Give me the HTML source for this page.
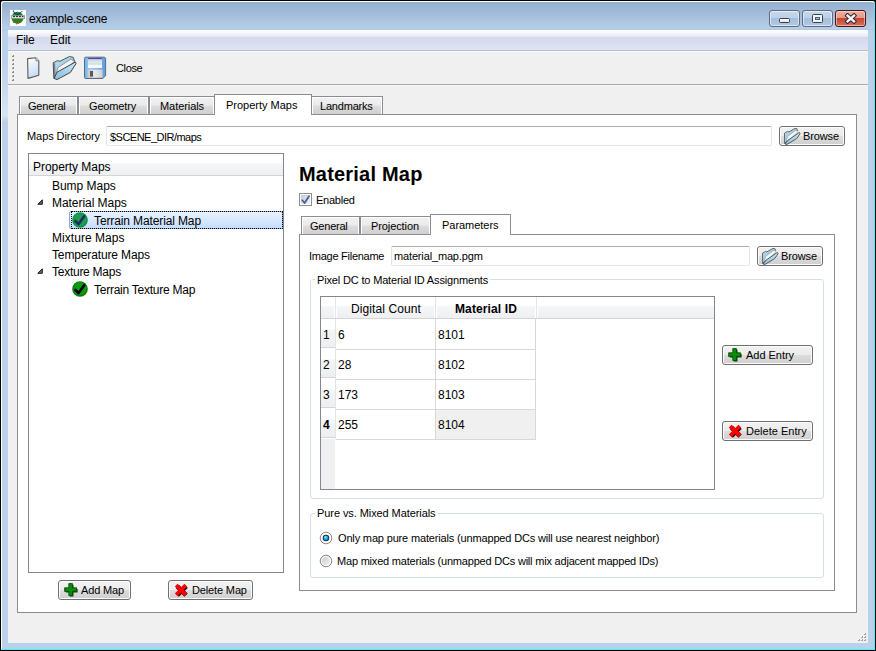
<!DOCTYPE html>
<html><head><meta charset="utf-8">
<style>
*{box-sizing:border-box;margin:0;padding:0}
html,body{width:876px;height:651px;overflow:hidden;background:#000}
body{position:relative;font-family:"Liberation Sans",sans-serif;color:#000}
.a{position:absolute}
.t{position:absolute;white-space:nowrap;font-size:11px;line-height:13px}
.s{position:absolute;white-space:nowrap;font-size:12px;line-height:14px}
.tab{position:absolute;border:1px solid #898c95;border-bottom:none;background:linear-gradient(#f2f2f2 0,#ebebeb 8px,#dddddd 9px,#cfcfcf 100%);box-shadow:inset 1px 1px 0 #fff,inset -1px 0 0 #fff}
.tabsel{position:absolute;border:1px solid #898c95;border-bottom:none;background:#fff}
.pane{position:absolute;border:1px solid #898c95;background:#fff}
.edit{position:absolute;border:1px solid;border-color:#abadb3 #e2e3ea #e3e9ef #e2e3ea;border-radius:2px;background:#fff}
.btn{position:absolute;border:1px solid #707070;border-radius:3px;background:linear-gradient(#f2f2f2 0,#ebebeb 50%,#dddddd 50%,#cfcfcf 100%);box-shadow:inset 0 0 0 1px #fcfcfc}
.grp{position:absolute;border:1px solid #d5dfe5;border-radius:3px}
.gtitle{position:absolute;background:#fff;padding:0 2px}
</style></head><body>
<!-- window frame -->
<div class="a" style="left:1px;top:1px;width:874px;height:649px;background:#fff;border-radius:3px 3px 0 0"></div>
<div class="a" style="left:1px;top:1px;width:874px;height:649px;border-right:1px solid #3ff0ff;border-bottom:1px solid #3ff0ff;border-top:1px solid #fff;border-left:1px solid #fff;border-radius:3px 3px 0 0;background:linear-gradient(#95afcf 0,#a1bbd8 11px,#b7cee8 26px,#b0c8e2 28px,#b9d1ea 29px)"></div>
<div class="a" style="left:2px;top:60px;width:6px;height:62px;background:linear-gradient(#b9d1ea 0,#c9ddf1 35px,#d6e6f6 55px,#b9d1ea 62px)"></div>
<!-- client -->
<div class="a" style="left:8px;top:30px;width:860px;height:613px;background:#f0f0f0"></div>

<!-- title -->
<svg class="a" style="left:10px;top:10px" width="16" height="16" viewBox="0 0 16 16">
<rect x="0" y="0" width="16" height="16" fill="#fff"/>
<circle cx="7.5" cy="7.8" r="6" fill="#158a15"/>
<path d="M0.8 5.2 H15 V8.8 H0.8 Z" fill="#9a9a9a"/>
<path d="M1.8 6.2 H14 V7.8 H1.8 Z" fill="#e8e8e8"/>
<path d="M3 6.5 H5 M6 6.5 H8 M9 6.5 H11 M12 6.5 H13.5" stroke="#333" stroke-width="1"/>
<path d="M3.5 9.5 V13 M6.5 9.5 V14.5 M8.5 9.5 V14" stroke="#b04a20" stroke-width="0.8"/>
<path d="M3.4 0.4 L4 2.5 L7.6 4.8 L11.5 1.8 L12.5 1.2" stroke="#0010d8" stroke-width="0.9" fill="none"/>
</svg>
<div class="s" style="letter-spacing:-0.20px;left:29px;top:12px">example.scene</div>


<!-- title buttons -->
<div class="a" style="left:769px;top:10px;width:31px;height:17px;border:1px solid #5d6b80;border-radius:3px;background:linear-gradient(#c6d8ec 0,#bcd0e8 7px,#a5bedb 7px,#b2c8e2 100%);box-shadow:inset 0 0 0 1px rgba(255,255,255,.55)"></div>
<div class="a" style="left:779px;top:18px;width:11px;height:5px;border:1px solid #353f52;border-radius:1.5px;background:linear-gradient(#fff,#e4e4e4)"></div>
<div class="a" style="left:802px;top:10px;width:31px;height:17px;border:1px solid #5d6b80;border-radius:3px;background:linear-gradient(#c6d8ec 0,#bcd0e8 7px,#a5bedb 7px,#b2c8e2 100%);box-shadow:inset 0 0 0 1px rgba(255,255,255,.55)"></div>
<div class="a" style="left:812px;top:14px;width:11px;height:9px;border:1px solid #353f52;border-radius:1.5px;background:#f4f4f4"></div>
<div class="a" style="left:815px;top:17px;width:5px;height:3px;border:1px solid #4a5a72;background:#a9c2de"></div>
<div class="a" style="left:835px;top:10px;width:31px;height:17px;border:1px solid #4a1414;border-radius:3px;background:linear-gradient(#eab0a0 0,#e29a88 7px,#c4412a 7px,#d5735c 100%);box-shadow:inset 0 0 0 1px rgba(255,220,210,.6)"></div>
<svg class="a" style="left:844px;top:13px" width="14" height="11" viewBox="0 0 14 11">
<path d="M3.6 2.6 L10 8.4 M10 2.6 L3.6 8.4" stroke="#2f2a3a" stroke-width="4.4" stroke-linecap="square"/>
<path d="M3.6 2.6 L10 8.4 M10 2.6 L3.6 8.4" stroke="#f4f4f4" stroke-width="2.4" stroke-linecap="square"/>
</svg>

<!-- menu bar -->
<div class="a" style="left:8px;top:30px;width:860px;height:21px;background:linear-gradient(#fefefe 0,#f7f8fb 3px,#e6e9f3 6.5px,#d4d9eb 7px,#dfe4f3 19px);border-bottom:1px solid #b6bccc"></div>
<div class="s" style="letter-spacing:-0.19px;left:16px;top:33px">File</div>
<div class="s" style="letter-spacing:-0.02px;left:50px;top:33px">Edit</div>

<!-- toolbar -->
<div class="a" style="left:8px;top:51px;width:860px;height:1px;background:#fbfbfb"></div>
<div class="a" style="left:8px;top:84px;width:860px;height:1px;background:#a8a8a8"></div>
<div class="a" style="left:8px;top:85px;width:860px;height:1px;background:#f8f8f8"></div>
<div class="a" style="left:12px;top:55px;width:2px;height:2px;background:linear-gradient(135deg,#dcdcdc 0 35%,#8a8a8a 35%)"></div><div class="a" style="left:12px;top:59px;width:2px;height:2px;background:linear-gradient(135deg,#dcdcdc 0 35%,#8a8a8a 35%)"></div><div class="a" style="left:12px;top:63px;width:2px;height:2px;background:linear-gradient(135deg,#dcdcdc 0 35%,#8a8a8a 35%)"></div><div class="a" style="left:12px;top:67px;width:2px;height:2px;background:linear-gradient(135deg,#dcdcdc 0 35%,#8a8a8a 35%)"></div><div class="a" style="left:12px;top:71px;width:2px;height:2px;background:linear-gradient(135deg,#dcdcdc 0 35%,#8a8a8a 35%)"></div><div class="a" style="left:12px;top:75px;width:2px;height:2px;background:linear-gradient(135deg,#dcdcdc 0 35%,#8a8a8a 35%)"></div><div class="a" style="left:12px;top:79px;width:2px;height:2px;background:linear-gradient(135deg,#dcdcdc 0 35%,#8a8a8a 35%)"></div>
<div class="t" style="letter-spacing:-0.35px;left:116px;top:62px">Close</div>


<!-- toolbar icons -->
<svg class="a" style="left:24px;top:55px" width="20" height="26" viewBox="0 0 20 26">
<defs><linearGradient id="gdoc" x1="0" y1="0" x2="0.3" y2="1"><stop offset="0" stop-color="#ffffff"/><stop offset="1" stop-color="#c9dbf7"/></linearGradient></defs>
<path d="M3.6 3.6 L11.8 2.8 L14.8 5.8 L14.8 20.2 L4 23.4 Z" fill="url(#gdoc)" stroke="#5a5a5a" stroke-width="1.1" stroke-linejoin="round"/>
<path d="M11.8 2.8 L12 5.9 L14.8 5.8" fill="#ddd" stroke="#777" stroke-width="0.8"/>
</svg>
<svg class="a" style="left:50px;top:53px" width="30" height="30" viewBox="0 0 30 30">
<defs><linearGradient id="tfb" x1="0" y1="0" x2="1" y2="1"><stop offset="0" stop-color="#c2e2f4"/><stop offset="0.6" stop-color="#9cc8e2"/><stop offset="1" stop-color="#6f9fbd"/></linearGradient>
<linearGradient id="tff" x1="0" y1="1" x2="1" y2="0"><stop offset="0" stop-color="#86bcdc"/><stop offset="1" stop-color="#c8e8f8"/></linearGradient>
<linearGradient id="tfl" x1="0" y1="0" x2="1" y2="0"><stop offset="0" stop-color="#303a44"/><stop offset="1" stop-color="#8aa4b8"/></linearGradient></defs>
<path d="M3.2 9.7 L7.8 7.6 L9.9 8.3 L19.4 3.5 L23.3 4.3 L24.8 9.2 L8 24 L3.8 25.2 Z" fill="url(#tfb)" stroke="#555" stroke-width="1" stroke-linejoin="round"/>
<path d="M3.4 10.5 L5.2 10 L6 23 L4 25 Z" fill="url(#tfl)" opacity="0.7"/>
<path d="M6.4 19.4 L8.2 14.4 L20.8 6.2 L24.6 8.4 L9 21.6 Z" fill="#f4f4f4" stroke="#7a7a7a" stroke-width="0.7" stroke-linejoin="round"/>
<path d="M4.1 25.4 L7 19.2 L25.4 9 L26 10.6 L20.4 19.4 L7 26.6 Z" fill="url(#tff)" stroke="#444" stroke-width="1" stroke-linejoin="round"/>
</svg>
<svg class="a" style="left:83px;top:56px" width="24" height="24" viewBox="0 0 24 24">
<defs><linearGradient id="gsave" x1="0" y1="0" x2="1" y2="0"><stop offset="0" stop-color="#6fb0f0"/><stop offset="0.25" stop-color="#9ccaf6"/><stop offset="1" stop-color="#5b9ee4"/></linearGradient>
<linearGradient id="glab" x1="0" y1="0" x2="0" y2="1"><stop offset="0" stop-color="#c6d0d2"/><stop offset="0.35" stop-color="#e2eaea"/><stop offset="0.55" stop-color="#cfe0e2"/><stop offset="0.75" stop-color="#ffffff"/><stop offset="1" stop-color="#f2f8ff"/></linearGradient>
<linearGradient id="gsh" x1="0" y1="0" x2="1" y2="0"><stop offset="0" stop-color="#c8c8c8"/><stop offset="0.5" stop-color="#e8e8e8"/><stop offset="1" stop-color="#d0d0d0"/></linearGradient></defs>
<path d="M1.5 2.5 Q1.5 1.2 2.8 1.2 L21.6 1.2 L22.6 2.4 L22.6 19.6 L19.8 22.5 L2.8 22.5 Q1.5 22.5 1.5 21.2 Z" fill="url(#gsave)" stroke="#606a74" stroke-width="1"/>
<rect x="5" y="2" width="14" height="1.2" fill="#5040c0"/>
<rect x="5" y="3.2" width="14" height="8.8" fill="url(#glab)"/>
<rect x="4.5" y="13.6" width="15" height="8" fill="url(#gsh)"/>
<rect x="7" y="15" width="3" height="5.6" fill="#5a5a5a"/>
</svg>


<!-- outer tabs -->
<div class="tab" style="left:19px;top:96px;width:59px;height:18px"></div>
<div class="tab" style="left:78px;top:96px;width:71px;height:18px"></div>
<div class="tab" style="left:149px;top:96px;width:66px;height:18px"></div>
<div class="tab" style="left:311px;top:96px;width:72px;height:18px"></div>
<div class="pane" style="left:17px;top:114px;width:840px;height:499px"></div>
<div class="tabsel" style="left:214px;top:94px;width:98px;height:21px"></div>
<div class="t" style="letter-spacing:-0.22px;left:28px;top:100px">General</div>
<div class="t" style="letter-spacing:-0.16px;left:89px;top:100px">Geometry</div>
<div class="t" style="letter-spacing:-0.07px;left:160px;top:100px">Materials</div>
<div class="t" style="letter-spacing:-0.01px;left:226px;top:99px">Property Maps</div>
<div class="t" style="letter-spacing:-0.20px;left:320px;top:100px">Landmarks</div>

<div class="t" style="letter-spacing:-0.07px;left:27px;top:130px">Maps Directory</div>
<div class="edit" style="left:106px;top:126px;width:666px;height:20px"></div>
<div class="t" style="letter-spacing:-0.52px;left:110px;top:131px">$SCENE_DIR/maps</div>
<div class="btn" style="left:779px;top:126px;width:66px;height:20px"></div>
<div class="t" style="letter-spacing:-0.13px;left:803px;top:130px">Browse</div>

<!-- tree -->
<div class="a" style="left:28px;top:153px;width:256px;height:420px;border:1px solid #828790;background:#fff"></div>
<div class="a" style="left:29px;top:154px;width:254px;height:22px;background:linear-gradient(#fff 0,#fff 9px,#f5f6f8 9px,#eeeff1 100%);border-bottom:1px solid #d5d5d5"></div>
<div class="s" style="letter-spacing:-0.04px;left:33px;top:160px">Property Maps</div>
<div class="s" style="letter-spacing:-0.03px;left:52px;top:179px">Bump Maps</div>
<div class="s" style="letter-spacing:-0.05px;left:52px;top:196px">Material Maps</div>
<div class="a" style="left:69px;top:211px;width:214px;height:18px;border:1px solid #84acdd;border-radius:2px;background:linear-gradient(#eaf3fe,#c6defc)"></div>
<div class="a" style="left:71px;top:211px;width:212px;height:18px;border:1px dotted #000"></div>
<div class="s" style="letter-spacing:-0.12px;left:94px;top:214px">Terrain Material Map</div>
<div class="s" style="letter-spacing:0.05px;left:52px;top:231px">Mixture Maps</div>
<div class="s" style="letter-spacing:-0.14px;left:52px;top:248px">Temperature Maps</div>
<div class="s" style="letter-spacing:-0.26px;left:52px;top:265px">Texture Maps</div>
<div class="s" style="letter-spacing:-0.25px;left:94px;top:283px">Terrain Texture Map</div>
<svg class="a" style="left:36px;top:198px" width="8" height="8"><path d="M6.3 1.8 L6.3 6.3 L1.8 6.3 Z" fill="#6a6a6a" stroke="#1a1a1a" stroke-width="1" stroke-linejoin="round"/></svg>
<svg class="a" style="left:36px;top:267px" width="8" height="8"><path d="M6.3 1.8 L6.3 6.3 L1.8 6.3 Z" fill="#6a6a6a" stroke="#1a1a1a" stroke-width="1" stroke-linejoin="round"/></svg>
<svg class="a" style="left:72px;top:212px" width="16" height="16" viewBox="0 0 16 16">
<circle cx="8" cy="8" r="7.8" fill="#138a4a"/><circle cx="8" cy="7.6" r="6.6" fill="#1c9c50"/>
<path d="M3.4 9 L6.6 12 L12.2 4.2" stroke="#1b2e5e" stroke-width="2.6" fill="none" stroke-linecap="round" stroke-linejoin="round"/>
</svg>
<svg class="a" style="left:72px;top:281px" width="16" height="16" viewBox="0 0 16 16">
<circle cx="8" cy="8" r="7.8" fill="#077a07"/><circle cx="8" cy="7.6" r="6.6" fill="#0c9a0c"/>
<path d="M3.4 9 L6.6 12 L12.2 4.2" stroke="#000" stroke-width="2.6" fill="none" stroke-linecap="round" stroke-linejoin="round"/>
</svg>

<!-- right side -->
<div class="a" style="letter-spacing:0.2px;left:299px;top:164px;font:bold 20px/20px 'Liberation Sans';white-space:nowrap;">Material Map</div>
<div class="a" style="left:299px;top:193px;width:13px;height:13px;border:1px solid #8e8f8f;background:#fff"></div>
<div class="a" style="left:301px;top:195px;width:9px;height:9px;background:linear-gradient(135deg,#c8ccd4,#f0f0f2)"></div>
<svg class="a" style="left:299px;top:193px" width="13" height="13"><path d="M3.3 7.2 L5.6 10 L10 3.3" stroke="#4a5f9a" stroke-width="1.8" fill="none" stroke-linecap="round" stroke-linejoin="round"/></svg>
<div class="t" style="letter-spacing:-0.24px;left:316px;top:194px">Enabled</div>

<div class="tab" style="left:301px;top:216px;width:59px;height:18px"></div>
<div class="tab" style="left:360px;top:216px;width:71px;height:18px"></div>
<div class="pane" style="left:299px;top:234px;width:536px;height:357px"></div>
<div class="tabsel" style="left:430px;top:214px;width:81px;height:21px"></div>
<div class="t" style="letter-spacing:-0.22px;left:310px;top:220px">General</div>
<div class="t" style="letter-spacing:-0.1px;left:371px;top:220px">Projection</div>
<div class="t" style="letter-spacing:-0.03px;left:442px;top:219px">Parameters</div>

<div class="t" style="letter-spacing:-0.26px;left:309px;top:250px">Image Filename</div>
<div class="edit" style="left:391px;top:246px;width:359px;height:20px"></div>
<div class="t" style="letter-spacing:-0.15px;left:394px;top:250px">material_map.pgm</div>
<div class="btn" style="left:757px;top:246px;width:66px;height:20px"></div>
<div class="t" style="letter-spacing:-0.13px;left:781px;top:250px">Browse</div>

<div class="grp" style="left:310px;top:279px;width:514px;height:220px"></div>
<div class="gtitle t" style="letter-spacing:-0.16px;left:315px;top:274px">Pixel DC to Material ID Assignments</div>

<!-- table -->
<div class="a" style="left:320px;top:296px;width:395px;height:194px;border:1px solid #828790;background:#fff"></div>
<div class="a" style="left:321px;top:297px;width:393px;height:22px;background:linear-gradient(#fff 0,#fff 9px,#f5f6f8 9px,#eeeff1 100%);border-bottom:1px solid #d5d5d5"></div>
<div class="a" style="left:335px;top:297px;width:1px;height:21px;background:#e3e4e6;box-shadow:-1px 0 0 #fff,1px 0 0 #fff"></div>
<div class="a" style="left:435px;top:297px;width:1px;height:21px;background:#e3e4e6;box-shadow:-1px 0 0 #fff,1px 0 0 #fff"></div>
<div class="a" style="left:536px;top:297px;width:1px;height:21px;background:#e3e4e6;box-shadow:-1px 0 0 #fff,1px 0 0 #fff"></div>
<div class="a" style="left:321px;top:439px;width:14px;height:50px;background:#f0f0f0"></div>
<div class="a" style="left:321px;top:319px;width:14px;height:29px;background:linear-gradient(#fff 0,#fff 10px,#f3f4f6 11px,#eeeff1 100%);border-bottom:1px solid #d5d5d5"></div>
<div class="a" style="left:335px;top:319px;width:1px;height:30px;background:#e3e4e6"></div>
<div class="a" style="left:336px;top:349px;width:200px;height:1px;background:#d8d8d8"></div>
<div class="s" style="left:323px;top:328px;">1</div>
<div class="s" style="left:338px;top:328px">6</div>
<div class="s" style="left:438px;top:328px">8101</div>
<div class="a" style="left:321px;top:349px;width:14px;height:29px;background:linear-gradient(#fff 0,#fff 10px,#f3f4f6 11px,#eeeff1 100%);border-bottom:1px solid #d5d5d5"></div>
<div class="a" style="left:335px;top:349px;width:1px;height:30px;background:#e3e4e6"></div>
<div class="a" style="left:336px;top:379px;width:200px;height:1px;background:#d8d8d8"></div>
<div class="s" style="left:323px;top:358px;">2</div>
<div class="s" style="left:338px;top:358px">28</div>
<div class="s" style="left:438px;top:358px">8102</div>
<div class="a" style="left:321px;top:379px;width:14px;height:29px;background:linear-gradient(#fff 0,#fff 10px,#f3f4f6 11px,#eeeff1 100%);border-bottom:1px solid #d5d5d5"></div>
<div class="a" style="left:335px;top:379px;width:1px;height:30px;background:#e3e4e6"></div>
<div class="a" style="left:336px;top:409px;width:200px;height:1px;background:#d8d8d8"></div>
<div class="s" style="left:323px;top:388px;">3</div>
<div class="s" style="left:338px;top:388px">173</div>
<div class="s" style="left:438px;top:388px">8103</div>
<div class="a" style="left:321px;top:409px;width:14px;height:29px;background:linear-gradient(#fff 0,#fff 10px,#f3f4f6 11px,#eeeff1 100%);border-bottom:1px solid #d5d5d5"></div>
<div class="a" style="left:335px;top:409px;width:1px;height:30px;background:#e3e4e6"></div>
<div class="a" style="left:336px;top:439px;width:200px;height:1px;background:#d8d8d8"></div>
<div class="s" style="left:323px;top:418px;font-weight:bold;">4</div>
<div class="s" style="left:338px;top:418px">255</div>

<div class="a" style="left:436px;top:410px;width:99px;height:29px;background:#f0f0f0"></div>
<div class="s" style="left:438px;top:418px">8104</div>
<div class="a" style="left:435px;top:319px;width:1px;height:121px;background:#d8d8d8"></div>
<div class="a" style="left:535px;top:319px;width:1px;height:121px;background:#d8d8d8"></div>
<div class="s" style="letter-spacing:0.10px;left:351px;top:302px">Digital Count</div>
<div class="s" style="letter-spacing:0.12px;left:455px;top:302px;font-weight:bold">Material ID</div>

<div class="btn" style="left:722px;top:345px;width:91px;height:20px"></div>
<div class="t" style="letter-spacing:-0.03px;left:746px;top:349px">Add Entry</div>
<div class="btn" style="left:722px;top:421px;width:91px;height:20px"></div>
<div class="t" style="letter-spacing:0.01px;left:746px;top:425px">Delete Entry</div>

<div class="grp" style="left:310px;top:513px;width:514px;height:65px"></div>
<div class="gtitle t" style="letter-spacing:-0.08px;left:315px;top:507px">Pure vs. Mixed Materials</div>
<div class="t" style="letter-spacing:-0.16px;left:338px;top:532px">Only map pure materials (unmapped DCs will use nearest neighbor)</div>
<div class="t" style="letter-spacing:-0.20px;left:337px;top:555px">Map mixed materials (unmapped DCs will mix adjacent mapped IDs)</div>
<svg class="a" style="left:319px;top:531px" width="14" height="14" viewBox="0 0 14 14">
<defs><radialGradient id="rdot" cx="0.35" cy="0.3" r="0.8"><stop offset="0" stop-color="#b8f0ff"/><stop offset="0.5" stop-color="#2aa4e8"/><stop offset="1" stop-color="#1a7cc8"/></radialGradient></defs>
<circle cx="7" cy="7" r="5.8" fill="#fff" stroke="#8a8a8a" stroke-width="1"/>
<circle cx="7" cy="7" r="3.3" fill="#0e3a5e"/><circle cx="7" cy="7" r="2.3" fill="url(#rdot)"/>
</svg>
<svg class="a" style="left:319px;top:554px" width="14" height="14" viewBox="0 0 14 14">
<defs><linearGradient id="rg2" x1="0" y1="0" x2="1" y2="1"><stop offset="0" stop-color="#c9c9c9"/><stop offset="1" stop-color="#f6f6f6"/></linearGradient></defs>
<circle cx="7" cy="7" r="5.8" fill="url(#rg2)" stroke="#8a8a8a" stroke-width="1"/>
<circle cx="7" cy="7" r="4.6" fill="none" stroke="#fff" stroke-width="0.9"/>
</svg>

<div class="btn" style="left:58px;top:580px;width:73px;height:20px"></div>
<div class="t" style="letter-spacing:-0.16px;left:81px;top:584px">Add Map</div>
<div class="btn" style="left:168px;top:580px;width:85px;height:20px"></div>
<div class="t" style="letter-spacing:-0.14px;left:192px;top:584px">Delete Map</div>


<!-- button icons -->
<svg class="a" style="left:780px;top:124px" width="24" height="24" viewBox="0 0 24 24">
<defs><linearGradient id="fb780" x1="0" y1="0" x2="1" y2="1"><stop offset="0" stop-color="#bfe0f2"/><stop offset="1" stop-color="#7fb0cc"/></linearGradient>
<linearGradient id="ff780" x1="0" y1="1" x2="1" y2="0"><stop offset="0" stop-color="#8ec4e4"/><stop offset="1" stop-color="#c4e6f8"/></linearGradient></defs>
<path d="M4.5 9.2 L7.4 7.4 L8.8 7.9 L15 4.4 L16.8 4.5 L17.6 6.4 L6.2 18 L4.6 19.6 Z" fill="url(#fb780)" stroke="#5a5a5a" stroke-width="0.9" stroke-linejoin="round"/>
<path d="M6.6 15.6 L7.8 12.2 L15.8 6.3 L18.2 7.6 L8.4 17 Z" fill="#f6f6f6" stroke="#8a8a8a" stroke-width="0.5" stroke-linejoin="round"/>
<path d="M5 20 L8 16.2 L19.4 8.4 L20.1 9.8 L16.6 14.6 L7 20.4 Z" fill="url(#ff780)" stroke="#4a4a4a" stroke-width="0.9" stroke-linejoin="round"/>
</svg><svg class="a" style="left:758px;top:244px" width="24" height="24" viewBox="0 0 24 24">
<defs><linearGradient id="fb758" x1="0" y1="0" x2="1" y2="1"><stop offset="0" stop-color="#bfe0f2"/><stop offset="1" stop-color="#7fb0cc"/></linearGradient>
<linearGradient id="ff758" x1="0" y1="1" x2="1" y2="0"><stop offset="0" stop-color="#8ec4e4"/><stop offset="1" stop-color="#c4e6f8"/></linearGradient></defs>
<path d="M4.5 9.2 L7.4 7.4 L8.8 7.9 L15 4.4 L16.8 4.5 L17.6 6.4 L6.2 18 L4.6 19.6 Z" fill="url(#fb758)" stroke="#5a5a5a" stroke-width="0.9" stroke-linejoin="round"/>
<path d="M6.6 15.6 L7.8 12.2 L15.8 6.3 L18.2 7.6 L8.4 17 Z" fill="#f6f6f6" stroke="#8a8a8a" stroke-width="0.5" stroke-linejoin="round"/>
<path d="M5 20 L8 16.2 L19.4 8.4 L20.1 9.8 L16.6 14.6 L7 20.4 Z" fill="url(#ff758)" stroke="#4a4a4a" stroke-width="0.9" stroke-linejoin="round"/>
</svg><svg class="a" style="left:728px;top:348px" width="15" height="15" viewBox="0 0 15 15">
<path d="M5.3 1.2 H8.9 V5.3 H13 V8.9 H8.9 V13 H5.3 V8.9 H1.2 V5.3 H5.3 Z" fill="#004a00" transform="translate(0.6,0.6)"/>
<path d="M4.8 0.6 H8.4 V4.8 H12.6 V8.4 H8.4 V12.6 H4.8 V8.4 H0.6 V4.8 H4.8 Z" fill="#0a8f0a" stroke="#0b3d0b" stroke-width="0.8"/>
</svg><svg class="a" style="left:728px;top:424px" width="15" height="15" viewBox="0 0 15 15">
<path d="M2.6 2.6 L11.4 11.4 M11.4 2.6 L2.6 11.4" stroke="#2a0a0a" stroke-width="4.6" stroke-linecap="butt" transform="translate(0.7,0.7)"/>
<path d="M2.2 2.2 L11.8 11.8 M11.8 2.2 L2.2 11.8" stroke="#ff0000" stroke-width="3.8" stroke-linecap="butt"/>
</svg><svg class="a" style="left:64px;top:583px" width="15" height="15" viewBox="0 0 15 15">
<path d="M5.3 1.2 H8.9 V5.3 H13 V8.9 H8.9 V13 H5.3 V8.9 H1.2 V5.3 H5.3 Z" fill="#004a00" transform="translate(0.6,0.6)"/>
<path d="M4.8 0.6 H8.4 V4.8 H12.6 V8.4 H8.4 V12.6 H4.8 V8.4 H0.6 V4.8 H4.8 Z" fill="#0a8f0a" stroke="#0b3d0b" stroke-width="0.8"/>
</svg><svg class="a" style="left:174px;top:583px" width="15" height="15" viewBox="0 0 15 15">
<path d="M2.6 2.6 L11.4 11.4 M11.4 2.6 L2.6 11.4" stroke="#2a0a0a" stroke-width="4.6" stroke-linecap="butt" transform="translate(0.7,0.7)"/>
<path d="M2.2 2.2 L11.8 11.8 M11.8 2.2 L2.2 11.8" stroke="#ff0000" stroke-width="3.8" stroke-linecap="butt"/>
</svg>
<div class="a" style="left:864px;top:633px;width:2px;height:2px;background:linear-gradient(135deg,#fff 0 45%,#a4a4a4 45%)"></div><div class="a" style="left:861px;top:636px;width:2px;height:2px;background:linear-gradient(135deg,#fff 0 45%,#a4a4a4 45%)"></div><div class="a" style="left:864px;top:636px;width:2px;height:2px;background:linear-gradient(135deg,#fff 0 45%,#a4a4a4 45%)"></div><div class="a" style="left:858px;top:639px;width:2px;height:2px;background:linear-gradient(135deg,#fff 0 45%,#a4a4a4 45%)"></div><div class="a" style="left:861px;top:639px;width:2px;height:2px;background:linear-gradient(135deg,#fff 0 45%,#a4a4a4 45%)"></div><div class="a" style="left:864px;top:639px;width:2px;height:2px;background:linear-gradient(135deg,#fff 0 45%,#a4a4a4 45%)"></div>
</body></html>
